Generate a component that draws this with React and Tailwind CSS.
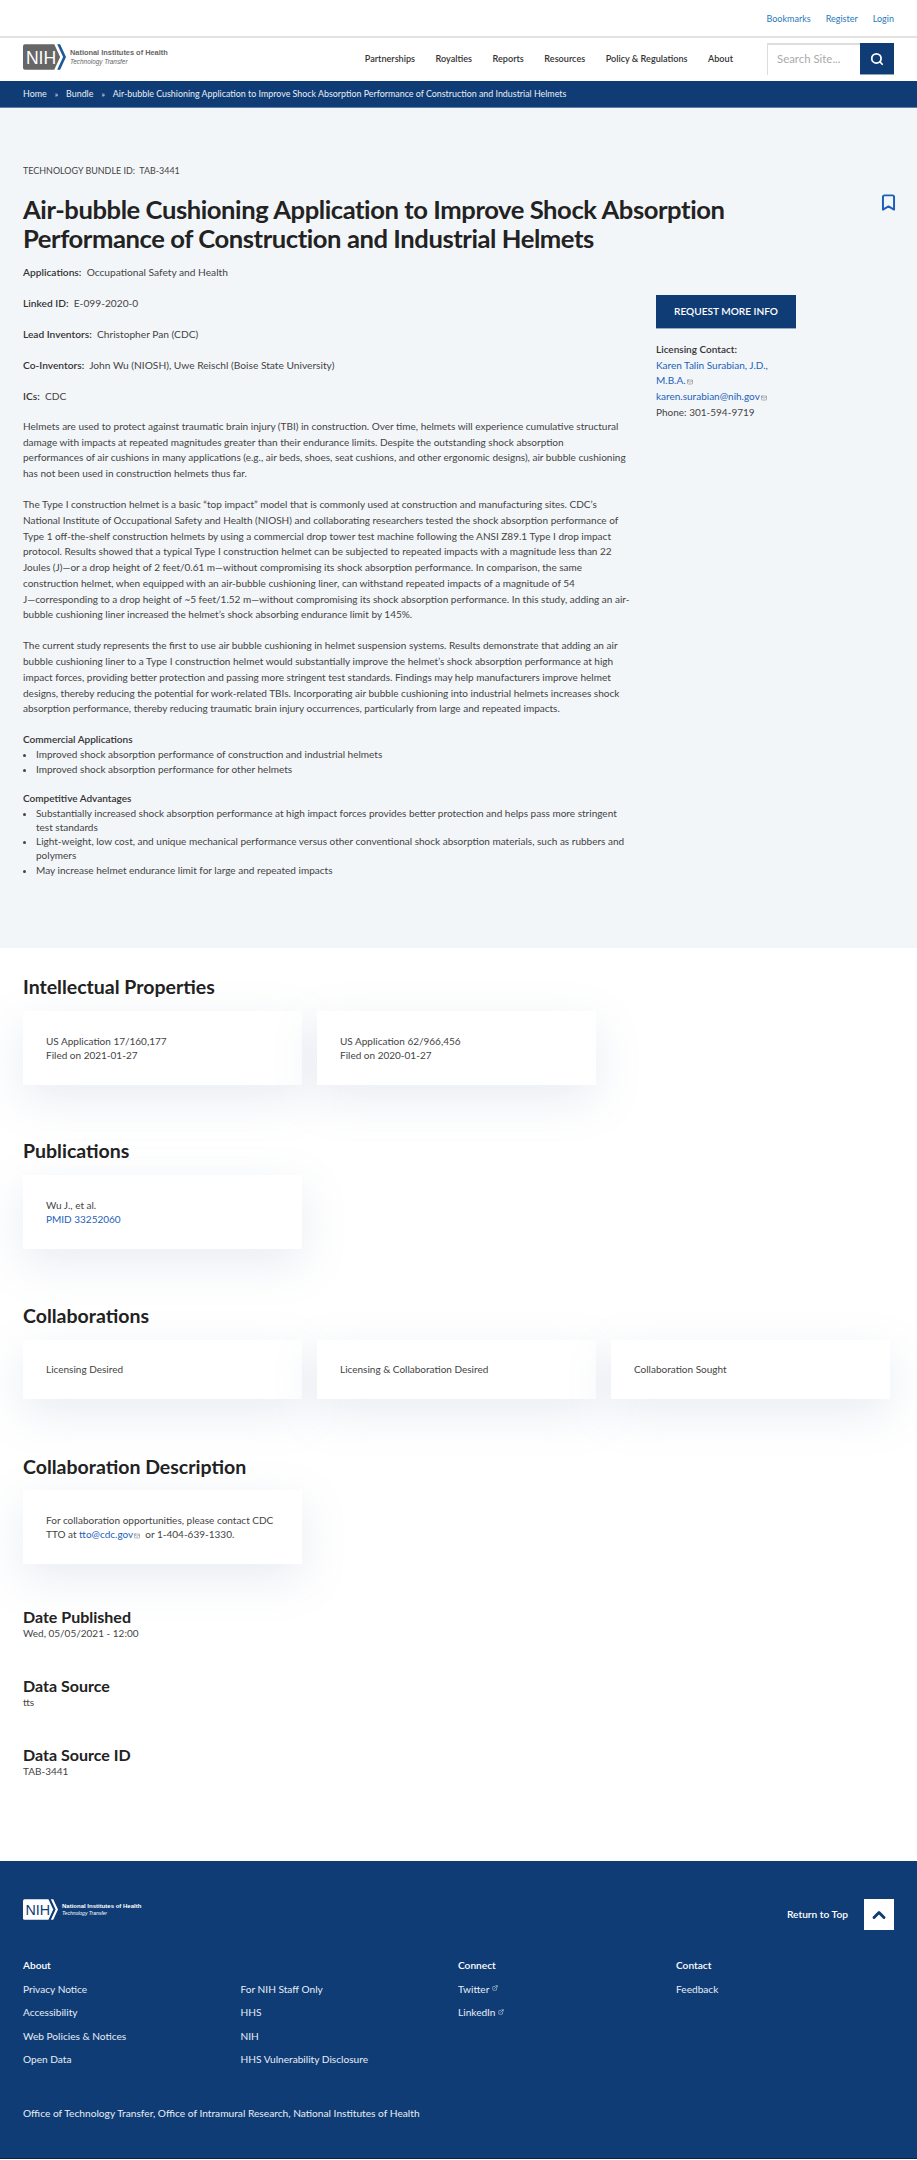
import { Bookmark, ChevronUp, ExternalLink, Mail, Search } from "lucide-react";

const navItems = ["Partnerships", "Royalties", "Reports", "Resources", "Policy & Regulations", "About"];

const paragraphs = [
  "Helmets are used to protect against traumatic brain injury (TBI) in construction. Over time, helmets will experience cumulative structural damage with impacts at repeated magnitudes greater than their endurance limits. Despite the outstanding shock absorption performances\u00a0of air cushions in many applications (e.g., air beds, shoes, seat cushions, and other ergonomic designs), air bubble cushioning has not been used in construction helmets thus far.",
  "The Type I construction helmet is a basic “top impact” model that is commonly used at construction and manufacturing sites. CDC’s National Institute of Occupational Safety and Health (NIOSH) and collaborating researchers tested the shock absorption performance of Type 1 off-the-shelf construction helmets by using a commercial drop tower test machine following the ANSI Z89.1 Type I drop impact protocol. Results showed that a typical Type I construction helmet can be subjected to repeated impacts with a magnitude less than 22 Joules (J)—or a drop height of 2 feet/0.61 m—without compromising its shock absorption performance. In comparison, the same construction helmet, when equipped with an air-bubble cushioning liner, can withstand repeated impacts of a magnitude of 54 J\u2060—\u2060corresponding to a drop height of ~5 feet/1.52 m—without compromising its shock absorption performance. In this study, adding an air-bubble cushioning liner increased the helmet’s shock absorbing endurance limit by 145%.",
  "The current study represents the first to use air bubble cushioning in helmet suspension systems. Results demonstrate that adding an air bubble cushioning liner to a Type I construction helmet would substantially improve the helmet’s shock absorption performance at high impact forces, providing better protection and passing more stringent test standards. Findings may help manufacturers improve helmet designs, thereby reducing the potential for work-related TBIs. Incorporating air bubble cushioning into industrial helmets increases shock absorption performance, thereby reducing traumatic brain injury occurrences, particularly from large and repeated impacts.",
];

function Logo({ dark }) {
  return (
    <div className="flex items-center gap-[4px]">
      <svg width={dark ? 35 : 43} height={dark ? 21 : 26} viewBox="0 0 44 26">
        <path d="M2 0H32L38 13L32 26H2Q0 26 0 24V2Q0 0 2 0Z" fill={dark ? "#fff" : "#666"} />
        <path d="M35 0H38L44 13L38 26H35L41 13Z" fill={dark ? "#fff" : "#1c5a9c"} />
        {/* NIH letters belong to the logo mark */}
        <text x="3" y="20" fontSize="18" fontWeight="500" fontFamily="Liberation Sans, sans-serif" fill={dark ? "#0f3c75" : "#fff"}>NIH</text>
      </svg>
      <div className={`font-['Liberation_Sans',sans-serif] ${dark ? "text-white" : "text-[#666]"}`}>
        <div className={`font-bold ${dark ? "text-[6px] leading-[7px]" : "text-[7.4px] leading-[9px]"}`}>National Institutes of Health</div>
        <div className={`italic ${dark ? "text-[5px] leading-[7px]" : "text-[6.4px] leading-[9px]"}`}>Technology Transfer</div>
      </div>
    </div>
  );
}

function MailMark() {
  return <Mail size={6} strokeWidth={2.5} className="inline ml-[1px] text-[#888]" />;
}

function Card({ children, className = "" }) {
  return (
    <div className={`w-[279px] bg-white px-[23px] shadow-[0_14px_45px_rgba(120,140,180,0.17)] text-[10px] leading-[14.2px] text-[#444] ${className}`}>
      {children}
    </div>
  );
}

function Heading({ children, className = "" }) {
  return <h2 className={`text-[19.5px] leading-[24px] font-bold text-[#222] ${className}`}>{children}</h2>;
}

function Meta({ label, value, className = "" }) {
  return (
    <div className={className}>
      <h3 className="text-[16px] leading-[19px] font-bold text-[#222]">{label}</h3>
      <p className="text-[10px] leading-[14px] text-[#444]">{value}</p>
    </div>
  );
}

function Field({ label, value }) {
  return (
    <p className="h-[31px] text-[10.2px] leading-[16px] text-[#444]">
      <span className="font-semibold text-[#333]">{label}:</span>&nbsp;&nbsp;{value}
    </p>
  );
}

function FooterLink({ children, external }) {
  return (
    <a className="block h-[23.4px] text-[10.15px] leading-[16px] text-[#e6edf5]">
      {children}
      {external && <ExternalLink size={6} className="inline ml-[3px] mb-[4px]" />}
    </a>
  );
}

export default function App() {
  return (
    <div className="min-h-[2160px] bg-white font-['Lato',sans-serif]">
      <div className="h-[38px] border-b-2 border-[#e2e2e2] flex justify-end items-start gap-[15px] pt-[12px] pr-[23px] text-[9px] leading-[14px] text-[#2a78b8]">
        <a>Bookmarks</a>
        <a>Register</a>
        <a>Login</a>
      </div>

      <header className="h-[43px] flex items-start justify-between pl-[23px] pr-[23px]">
        <div className="pt-[6px]">
          <Logo />
        </div>
        <div className="flex items-start">
          <nav className="flex gap-[20.5px] pt-[14px] mr-[34px] text-[9.1px] leading-[14px] font-semibold text-[#333]">
            {navItems.map((item) => (
              <a key={item}>{item}</a>
            ))}
          </nav>
          <div className="flex mt-[5px] h-[32px]">
            <div className="w-[93px] bg-white border-t-2 border-l border-[#ddd] pl-[9px] text-[11.4px] leading-[28px] text-[#aaa]">Search Site...</div>
            <button className="w-[34px] bg-[#0f3c75] border-b border-[#8aa] flex items-center justify-center">
              <Search size={14} strokeWidth={3} className="text-white" />
            </button>
          </div>
        </div>
      </header>

      <div className="h-[27px] bg-[#0f3c75] border-b border-[#5d7ea6] pl-[23px] flex items-center gap-[8px] text-[8.9px] text-[#e8eef5]">
        <a>Home</a>
        <span className="text-[8px]">»</span>
        <a>Bundle</a>
        <span className="text-[8px]">»</span>
        <a>Air-bubble Cushioning Application to Improve Shock Absorption Performance of Construction and Industrial Helmets</a>
      </div>

      <main className="h-[840px] bg-[#f3f6f9] pl-[23px] pr-[23px] pt-[55px]">
        <p className="text-[8.95px] leading-[16px] text-[#444]">TECHNOLOGY BUNDLE ID:&nbsp;&nbsp;TAB-3441</p>
        <div className="flex justify-between items-start mt-[16px]">
          <h1 className="w-[760px] text-[25.6px] leading-[29px] font-bold tracking-[-0.43px] text-[#222]">
            Air-bubble Cushioning Application to Improve Shock Absorption Performance of Construction and Industrial Helmets
          </h1>
          <Bookmark size={19} strokeWidth={2.5} className="text-[#1c5fb8] mt-[-2px] mr-[-4px]" />
        </div>

        <div className="flex mt-[11px]">
          <div className="w-[633px] pr-[21px]">
            <Field label="Applications" value="Occupational Safety and Health" />
            <Field label="Linked ID" value="E-099-2020-0" />
            <Field label="Lead Inventors" value="Christopher Pan (CDC)" />
            <Field label="Co-Inventors" value="John Wu (NIOSH), Uwe Reischl (Boise State University)" />
            <Field label="ICs" value="CDC" />
            {paragraphs.map((text) => (
              <p key={text} className="mb-[15.5px] text-[10.03px] leading-[15.7px] text-[#444]">{text}</p>
            ))}
            <h4 className="text-[10.03px] leading-[15px] font-semibold text-[#333]">Commercial Applications</h4>
            <ul className="list-disc pl-[13px] text-[10.03px] leading-[14.2px] text-[#444]">
              <li>Improved shock absorption performance of construction and industrial helmets</li>
              <li>Improved shock absorption performance for other helmets</li>
            </ul>
            <h4 className="mt-[15px] text-[10.03px] leading-[15px] font-semibold text-[#333]">Competitive Advantages</h4>
            <ul className="list-disc pl-[13px] text-[10.03px] leading-[14.2px] text-[#444]">
              <li>Substantially increased shock absorption performance at high impact forces provides better protection and helps pass more stringent test standards</li>
              <li>Light-weight, low cost, and unique mechanical performance versus other conventional shock absorption materials, such as rubbers and polymers</li>
              <li>May increase helmet endurance limit for large and repeated impacts</li>
            </ul>
          </div>
          <aside className="pt-[31px] w-[140px] shrink-0">
            <button className="w-[140px] h-[34px] bg-[#0f3c75] border-b border-[#9ab] text-[10.1px] font-semibold text-white">REQUEST MORE INFO</button>
            <div className="mt-[13px] text-[10px] leading-[15.7px] text-[#444]">
              <p className="font-semibold text-[#333]">Licensing Contact:</p>
              <a className="text-[#1c5fb8]">Karen Talin Surabian, J.D., M.B.A.<MailMark /></a>
              <a className="block text-[#1c5fb8]">karen.surabian@nih.gov<MailMark /></a>
              <p>Phone: 301-594-9719</p>
            </div>
          </aside>
        </div>
      </main>

      <section className="pl-[23px] pr-[23px]">
        <Heading className="mt-[27px]">Intellectual Properties</Heading>
        <div className="flex gap-[15px] mt-[12px]">
          <Card className="h-[74px] pt-[23px]">US Application 17/160,177<br />Filed on 2021-01-27</Card>
          <Card className="h-[74px] pt-[23px]">US Application 62/966,456<br />Filed on 2020-01-27</Card>
        </div>

        <Heading className="mt-[54px]">Publications</Heading>
        <Card className="mt-[12px] h-[74px] pt-[23px]">Wu J., et al.<br /><a className="text-[#1c5fb8]">PMID 33252060</a></Card>

        <Heading className="mt-[55px]">Collaborations</Heading>
        <div className="flex gap-[15px] mt-[12px]">
          <Card className="h-[59px] pt-[22px]">Licensing Desired</Card>
          <Card className="h-[59px] pt-[22px]">Licensing &amp; Collaboration Desired</Card>
          <Card className="h-[59px] pt-[22px]">Collaboration Sought</Card>
        </div>

        <Heading className="mt-[56px]">Collaboration Description</Heading>
        <Card className="mt-[11px] h-[74px] pt-[23px]">
          For collaboration opportunities, please contact CDC TTO at <a className="text-[#1c5fb8]">tto@cdc.gov</a><MailMark />&nbsp; or 1-404-639-1330.
        </Card>

        <Meta label="Date Published" value="Wed, 05/05/2021 - 12:00" className="mt-[43px]" />
        <Meta label="Data Source" value="tts" className="mt-[36px]" />
        <Meta label="Data Source ID" value="TAB-3441" className="mt-[36px]" />
      </section>

      <footer className="mt-[83px] h-[298px] bg-[#0f3c75] border-b border-[#0a2244] px-[23px] pt-[38px] text-white">
        <div className="flex justify-between items-start">
          <Logo dark />
          <div className="flex items-center gap-[16px]">
            <a className="text-[10.2px] font-semibold">Return to Top</a>
            <button className="w-[30px] h-[31px] bg-white flex items-center justify-center">
              <ChevronUp size={20} strokeWidth={3.5} className="text-[#0f3c75]" />
            </button>
          </div>
        </div>
        <div className="grid grid-cols-[217.5px_217.5px_218px_1fr] mt-[27px]">
          <div>
            <h5 className="h-[24px] text-[10.15px] leading-[16px] font-semibold">About</h5>
            <FooterLink>Privacy Notice</FooterLink>
            <FooterLink>Accessibility</FooterLink>
            <FooterLink>Web Policies &amp; Notices</FooterLink>
            <FooterLink>Open Data</FooterLink>
          </div>
          <div className="pt-[24px]">
            <FooterLink>For NIH Staff Only</FooterLink>
            <FooterLink>HHS</FooterLink>
            <FooterLink>NIH</FooterLink>
            <FooterLink>HHS Vulnerability Disclosure</FooterLink>
          </div>
          <div>
            <h5 className="h-[24px] text-[10.15px] leading-[16px] font-semibold">Connect</h5>
            <FooterLink external>Twitter</FooterLink>
            <FooterLink external>LinkedIn</FooterLink>
          </div>
          <div>
            <h5 className="h-[24px] text-[10.15px] leading-[16px] font-semibold">Contact</h5>
            <FooterLink>Feedback</FooterLink>
          </div>
        </div>
        <p className="mt-[30px] text-[10.2px] leading-[16px] text-[#e6edf5]">Office of Technology Transfer, Office of Intramural Research, National Institutes of Health</p>
      </footer>
    </div>
  );
}
